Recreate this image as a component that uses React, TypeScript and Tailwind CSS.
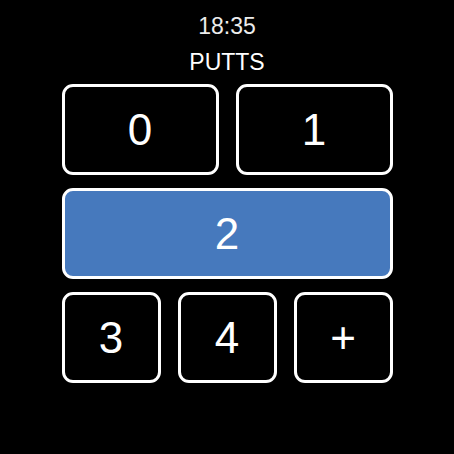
import React from "react";

function Btn({ label, active = false, className = "" }: { label: string; active?: boolean; className?: string }) {
  return (
    <div
      className={`h-[91px] rounded-[11px] border-[3px] border-white flex items-center justify-center text-white text-[44px] leading-none ${
        active ? "bg-[#4679bd]" : "bg-black"
      } ${className}`}
    >
      {label}
    </div>
  );
}

export default function App() {
  return (
    <div
      className="w-[454px] h-[454px] bg-black flex flex-col items-center"
      style={{ fontFamily: '"Liberation Sans", Arial, sans-serif' }}
    >
      <div className="mt-[13px] h-[26px] flex items-center text-[23px] text-[#ececec] leading-none">18:35</div>
      <div className="mt-[10px] h-[26px] flex items-center text-[23px] text-white leading-none">PUTTS</div>
      <div className="mt-[9px] w-[331px] flex flex-col gap-[13px]">
        <div className="grid grid-cols-2 gap-[17px]">
          <Btn label="0" />
          <Btn label="1" />
        </div>
        <Btn label="2" active />
        <div className="grid grid-cols-3 gap-[17px]">
          <Btn label="3" />
          <Btn label="4" />
          <Btn label="+" />
        </div>
      </div>
    </div>
  );
}
